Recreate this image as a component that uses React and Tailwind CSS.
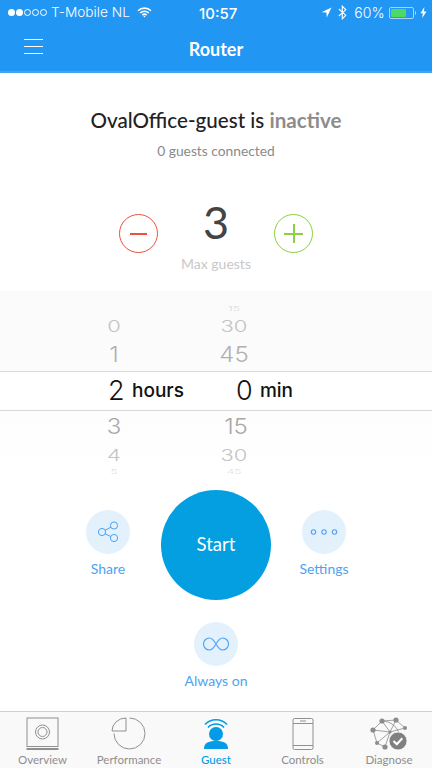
const sysFont = "font-['Inter','Roboto',sans-serif]";

const upperRows = [
  { hour: "", min: "15", box: "h-[11px]", text: "text-[12px] scale-y-50 text-[#d8d8d8]" },
  { hour: "0", min: "30", box: "h-[24px]", text: "text-[22px] scale-y-[0.72] text-[#c4c4c4]" },
  { hour: "1", min: "45", box: "h-[33px]", text: "text-[24px] scale-y-[0.92] text-[#b0b0b0]" },
];

const lowerRows = [
  { hour: "3", min: "15", box: "h-[31px]", text: "text-[24px] scale-y-[0.92] text-[#a8a8a8]", shift: true },
  { hour: "4", min: "30", box: "h-[26px]", text: "text-[22px] scale-y-[0.75] text-[#c4c4c4]" },
  { hour: "5", min: "45", box: "h-[8px]", text: "text-[12px] scale-y-50 text-[#dddddd]" },
];

function WheelRow({ row }) {
  return (
    <div className={`flex items-center overflow-hidden pl-[96px] font-light ${sysFont} ${row.box}`}>
      <span className={`w-[36px] text-center leading-none ${row.text}`}>{row.hour}</span>
      <span className={`ml-[82px] w-[40px] text-center leading-none ${row.text} ${row.shift ? "translate-x-[2px]" : ""}`}>{row.min}</span>
    </div>
  );
}

function StatusBar() {
  return (
    <div className={`relative flex h-[24px] items-center justify-between pl-[8px] pr-[5px] pt-[1px] text-[15px] text-white ${sysFont}`}>
      <div className="flex items-center">
        <span className="flex items-center gap-[1px]">
          {[0, 1].map((i) => <span key={i} className="size-[7px] rounded-full bg-white" />)}
          {[0, 1, 2].map((i) => <span key={i} className="size-[7px] rounded-full border-[0.5px] border-white" />)}
        </span>
        <span className="ml-[4px] text-[13.700px] font-light">T-Mobile NL</span>
        <svg className="ml-[7px]" width="15" height="11" viewBox="0 0 15 11" fill="none" stroke="white" strokeWidth="1.600">
          <path d="M1 3.800a9.200 9.200 0 0 1 13 0" />
          <path d="M3.200 6a6.100 6.100 0 0 1 8.600 0" />
          <path d="M5.400 8.100a3 3 0 0 1 4.200 0" />
          <path d="M6.400 9.200l1.100 1.200 1.100-1.200a1.600 1.600 0 0 0-2.200 0z" fill="white" stroke="none" />
        </svg>
      </div>
      <div className="absolute left-[199px] top-[3px] text-[15px] font-medium">10:57</div>
      <div className="flex items-center">
        <svg width="11" height="11" viewBox="0 0 11 11" fill="white"><path d="M10.500 0.500 0.500 5.300l4.900.3.4 4.900z" /></svg>
        <svg className="ml-[6px]" width="9" height="15" viewBox="0 0 9 15" fill="none" stroke="white" strokeWidth="1.100">
          <path d="M0.800 4l7 6.200-3.500 3.600V1.200l3.500 3.600-7 6.200" />
        </svg>
        <span className="ml-[7px] text-[14px] font-light">60%</span>
        <span className="ml-[4px] flex h-[12px] w-[25px] items-center rounded-[2px] border border-[#a9d4f9] p-[1px]">
          <span className="h-full w-[15px] rounded-[1px] bg-[#4cd964]" />
        </span>
        <span className="ml-[1px] h-[4px] w-[1.500px] rounded-r-sm bg-[#a9d4f9]" />
        <svg className="ml-[4px]" width="7" height="11" viewBox="0 0 7 11" fill="white"><path d="M4.300 0 0.500 6.200h2.300L2.200 11 6.500 4.500H4z" /></svg>
      </div>
    </div>
  );
}

function Header() {
  return (
    <div className="border-b-[2px] border-[#42a5f5] bg-[#2196f3]">
      <StatusBar />
      <div className="relative flex h-[47px] items-center justify-center pt-[3px] text-[18px] font-bold text-white">
        <div className="absolute left-[24px] top-[15px] flex w-[19px] flex-col gap-[6px]">
          <span className="h-px bg-white" />
          <span className="h-px bg-white" />
          <span className="h-px bg-white" />
        </div>
        Router
      </div>
    </div>
  );
}

function ActionCircle({ label, children }) {
  return (
    <div className="flex w-[80px] flex-col items-center">
      <div className="flex size-[44px] items-center justify-center rounded-full bg-[#e3f1fd]">{children}</div>
      <span className="mt-[5px] text-[14px] leading-[20px] text-[#4da3f2]">{label}</span>
    </div>
  );
}

function ShareIcon() {
  return (
    <svg width="24" height="24" viewBox="0 0 24 24" fill="none" stroke="#4da3f2" strokeWidth="1">
      <circle cx="6" cy="12" r="3.600" />
      <circle cx="18" cy="5.500" r="3.600" />
      <circle cx="18" cy="18" r="3.600" />
      <path d="M9 10.300l6-3.200M9 13.800l6 2.800" />
    </svg>
  );
}

function DotsIcon() {
  return (
    <svg width="28" height="8" viewBox="0 0 28 8" fill="none" stroke="#4da3f2" strokeWidth="1.100">
      <circle cx="3.500" cy="4" r="2.200" />
      <circle cx="14" cy="4" r="2.200" />
      <circle cx="24.500" cy="4" r="2.200" />
    </svg>
  );
}

function InfinityIcon() {
  return (
    <svg width="26" height="14" viewBox="0 0 26 14" fill="none" stroke="#4da3f2" strokeWidth="1.100">
      <path d="M13 7C11 3.500 9.500 1 6.500 1a6 6 0 0 0 0 12c3 0 4.500-2.500 6.500-6s3.500-6 6.500-6a6 6 0 0 1 0 12c-3 0-4.500-2.500-6.500-6z" />
    </svg>
  );
}

function OverviewIcon() {
  return (
    <svg width="34" height="34" viewBox="0 0 34 34" fill="none" stroke="#909090">
      <rect x="1" y="1" width="31" height="28.500" strokeWidth="1" />
      <circle cx="16.500" cy="15" r="7" strokeWidth="1" />
      <circle cx="16.500" cy="15" r="4.500" strokeWidth="1" />
      <path d="M0.500 32h32" strokeWidth="2" />
    </svg>
  );
}

function PerformanceIcon() {
  return (
    <svg width="36" height="34" viewBox="0 0 36 34" fill="none" stroke="#909090" strokeWidth="1">
      <path d="M15 1V14H1A14 13 0 0 1 15 1z" />
      <path d="M18.500 1A15.500 15.500 0 1 1 3 16.500" />
    </svg>
  );
}

function GuestIcon() {
  return (
    <svg width="26" height="35" viewBox="0 0 26 35" fill="none" stroke="#039be5">
      <path d="M2 7.500a15 15 0 0 1 22 0" strokeWidth="1.600" />
      <path d="M5 10.500a11 11 0 0 1 16 0" strokeWidth="1.600" />
      <circle cx="13" cy="17" r="7" fill="#039be5" stroke="none" />
      <path d="M1 32c0-6 4-8 12-8s12 2 12 8z" fill="#039be5" stroke="none" />
    </svg>
  );
}

function ControlsIcon() {
  return (
    <svg width="22" height="34" viewBox="0 0 22 34" fill="none" stroke="#909090" strokeWidth="1">
      <rect x="1" y="1.500" width="20" height="31" rx="1.500" />
      <path d="M1 6.500h20M1 28.500h20M8 4h6" />
    </svg>
  );
}

function DiagnoseIcon() {
  const nodes = [[12, 4, 2.600], [26, 3, 2.600], [35, 11, 2], [3, 13, 2.600], [7, 26, 2], [15, 30, 2.600], [20, 15, 1.500]];
  return (
    <svg width="38" height="34" viewBox="0 0 38 34" fill="none" stroke="#8c8c8c" strokeWidth="0.800">
      <path d="M12 4l14-1 9 8M12 4L3 13l4 13 8 4M3 13l17 2 15-4M12 4l8 11-13 11M26 3l-6 12-5 15M12 4c10 0 18 8 18 18" />
      {nodes.map(([cx, cy, r]) => <circle key={`${cx}-${cy}`} cx={cx} cy={cy} r={r} fill="#8c8c8c" stroke="none" />)}
      <circle cx="28" cy="24" r="9" fill="#808080" stroke="#f9f9f9" strokeWidth="0.800" />
      <path d="M23.500 24l3.300 3.300 5.500-6" stroke="white" strokeWidth="2" />
    </svg>
  );
}

const tabs = [
  { label: "Overview", width: "w-[85px]", Icon: OverviewIcon },
  { label: "Performance", width: "w-[88px]", Icon: PerformanceIcon },
  { label: "Guest", width: "w-[86px]", Icon: GuestIcon, active: true },
  { label: "Controls", width: "w-[87px]", Icon: ControlsIcon },
  { label: "Diagnose", width: "w-[86px]", Icon: DiagnoseIcon },
];

function TabBar() {
  return (
    <div className="flex h-[57px] border-t border-[#cfcfcf] bg-[#f9f9f9]">
      {tabs.map(({ label, width, Icon, active }) => (
        <div key={label} className={`flex flex-col items-center pt-[5px] ${width}`}>
          <div className="flex h-[35px] items-start justify-center"><Icon /></div>
          <span className={`mt-[1px] text-[11.500px] leading-[14px] ${active ? "font-medium text-[#039be5]" : "text-[#8e8e8e]"}`}>{label}</span>
        </div>
      ))}
    </div>
  );
}

export default function App() {
  return (
    <div className="flex h-[768px] w-[432px] flex-col overflow-hidden bg-white font-['Lato',sans-serif]">
      <Header />

      <div className="flex h-[218px] flex-col items-center">
        <h1 className="mt-[33px] text-[20.600px] font-medium leading-[28px] text-[#222222]">
          OvalOffice-guest is <span className="font-bold text-[#8c8c8c]">inactive</span>
        </h1>
        <p className="mt-[8px] text-[13.800px] leading-[18px] text-[#8a8a8a]">0 guests connected</p>
        <div className="mt-[36px] flex w-[194px] items-start justify-between">
          <button className="mt-[18px] flex size-[39px] items-center justify-center rounded-full border border-[#f0503c]">
            <span className="h-[2px] w-[17px] bg-[#f0503c]" />
          </button>
          <div className="flex flex-col items-center">
            <span className="text-[45px] leading-[52px] text-[#444444]">3</span>
            <span className="mt-[8px] text-[14px] leading-[16px] text-[#c8c8c8]">Max guests</span>
          </div>
          <button className="relative mt-[18px] flex size-[39px] items-center justify-center rounded-full border border-[#8bd140]">
            <span className="h-[2px] w-[19px] bg-[#8bd140]" />
            <span className="absolute h-[19px] w-[2px] bg-[#8bd140]" />
          </button>
        </div>
      </div>

      <div className="bg-gradient-to-b from-[#fafafa] to-white pt-[12px]">
        {upperRows.map((row) => <WheelRow key={row.min} row={row} />)}
        <div className={`flex h-[40px] items-center border-y border-[#d9d9d9] bg-white pl-[108px] pt-px text-[#111111] ${sysFont}`}>
          <span className="w-[16px] text-center text-[27px] font-light">2</span>
          <span className="ml-[8px] text-[19px] font-medium">hours</span>
          <span className="ml-[52px] w-[16px] text-center text-[27px] font-light">0</span>
          <span className="ml-[8px] text-[19px] font-medium">min</span>
        </div>
        {lowerRows.map((row) => <WheelRow key={row.min} row={row} />)}
      </div>

      <div className="flex h-[170px] flex-col items-center">
        <div className="flex w-[296px] items-start justify-between">
          <div className="mt-[34px]">
            <ActionCircle label="Share"><ShareIcon /></ActionCircle>
          </div>
          <button className="mt-[14px] flex size-[110px] items-center justify-center rounded-full bg-[#039fe0] text-[18.500px] text-white">Start</button>
          <div className="mt-[34px]">
            <ActionCircle label="Settings"><DotsIcon /></ActionCircle>
          </div>
        </div>
        <div className="mt-[22px]">
          <ActionCircle label="Always on"><InfinityIcon /></ActionCircle>
        </div>
      </div>

      <div className="mt-auto"><TabBar /></div>
    </div>
  );
}
